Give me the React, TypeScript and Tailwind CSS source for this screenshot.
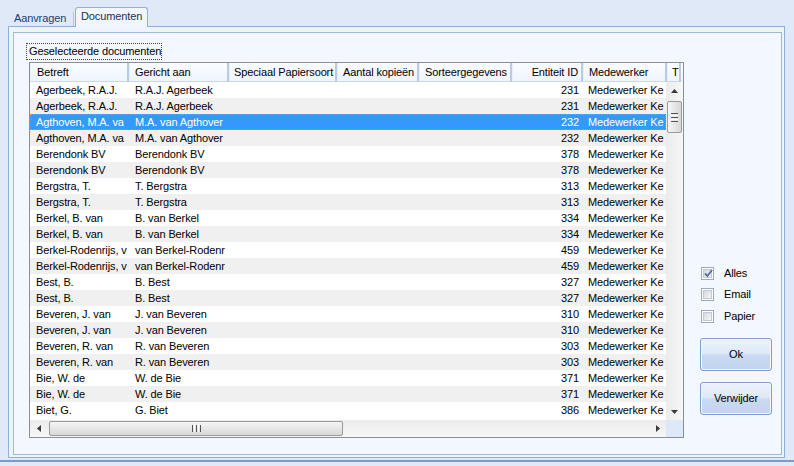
import React from "react";

type Row = [string, string, string];

const rows: Row[] = [
  ["Agerbeek, R.A.J.", "R.A.J. Agerbeek", "231"],
  ["Agerbeek, R.A.J.", "R.A.J. Agerbeek", "231"],
  ["Agthoven, M.A. va", "M.A. van Agthover", "232"],
  ["Agthoven, M.A. va", "M.A. van Agthover", "232"],
  ["Berendonk BV", "Berendonk BV", "378"],
  ["Berendonk BV", "Berendonk BV", "378"],
  ["Bergstra, T.", "T. Bergstra", "313"],
  ["Bergstra, T.", "T. Bergstra", "313"],
  ["Berkel, B. van", "B. van Berkel", "334"],
  ["Berkel, B. van", "B. van Berkel", "334"],
  ["Berkel-Rodenrijs, v", "van Berkel-Rodenr", "459"],
  ["Berkel-Rodenrijs, v", "van Berkel-Rodenr", "459"],
  ["Best, B.", "B. Best", "327"],
  ["Best, B.", "B. Best", "327"],
  ["Beveren, J. van", "J. van Beveren", "310"],
  ["Beveren, J. van", "J. van Beveren", "310"],
  ["Beveren, R. van", "R. van Beveren", "303"],
  ["Beveren, R. van", "R. van Beveren", "303"],
  ["Bie, W. de", "W. de Bie", "371"],
  ["Bie, W. de", "W. de Bie", "371"],
  ["Biet, G.", "G. Biet", "386"],
];

const headCell =
  "h-full shrink-0 overflow-hidden whitespace-nowrap border-l border-l-[#e6eef8] border-r-2 border-r-[#b7cbe6] border-b border-b-[#c9d8ec] leading-[18px]";

const headers: { label: string; cls: string }[] = [
  { label: "Betreft", cls: "w-[99px] pl-[6px]" },
  { label: "Gericht aan", cls: "w-[100px] pl-[5px]" },
  { label: "Speciaal Papiersoort", cls: "w-[108px] pl-[4px]" },
  { label: "Aantal kopieën", cls: "w-[82px] pl-[5px]" },
  { label: "Sorteergegevens", cls: "w-[93px] pl-[5px]" },
  { label: "Entiteit ID", cls: "w-[71px] pr-[3px] text-right" },
  { label: "Medewerker", cls: "w-[84px] pl-[5px]" },
  { label: "T", cls: "w-[14px] pl-[4px]" },
];

function Arrow({ dir }: { dir: "up" | "down" | "left" | "right" }) {
  const pts =
    dir === "up"
      ? "0,4 3.5,0 7,4"
      : dir === "down"
      ? "0,0 7,0 3.5,4"
      : dir === "left"
      ? "4,0 4,7 0,3.5"
      : "0,0 4,3.5 0,7";
  const w = dir === "up" || dir === "down" ? 7 : 4;
  const h = dir === "up" || dir === "down" ? 4 : 7;
  return (
    <svg width={w} height={h} viewBox={`0 0 ${w} ${h}`}>
      <polygon points={pts} fill="#3a3a3a" />
    </svg>
  );
}

function CheckBox({ checked }: { checked?: boolean }) {
  return (
    <div className="w-[13px] h-[13px] border border-[#9aaabf] bg-white p-[1px] shrink-0 relative">
      <div className="w-full h-full border border-[#c3c9d1] bg-linear-to-br from-[#d4d8de] to-[#f6f6f6]" />
      {checked && (
        <svg className="absolute left-[2px] top-[1px]" width="9" height="9" viewBox="0 0 9 9">
          <path d="M1 4.5 L3.5 7 L8 1" stroke="#4f6e9e" strokeWidth="1.8" fill="none" />
        </svg>
      )}
    </div>
  );
}

function Button({ label, cls }: { label: string; cls: string }) {
  return (
    <div
      className={
        "w-[72px] h-[33px] rounded-[3px] border border-[#7f9fcf] bg-[linear-gradient(#ecf2fb_0%,#dfe9f8_46%,#c9daf2_52%,#c2d5f0_100%)] shadow-[inset_0_0_0_1px_#f4f8fe] flex items-center justify-center text-black " +
        cls
      }
    >
      {label}
    </div>
  );
}

export default function App() {
  return (
    <div className="w-[794px] h-[466px] bg-[#dfe9f7] font-['Liberation_Sans',Arial,sans-serif] text-[11px] tracking-[-0.12px] text-black overflow-hidden flex flex-col">
      {/* tab strip */}
      <div className="h-[26px] flex items-end pl-[8px] shrink-0">
        <div className="w-[66px] h-[14px] border-r border-r-[#b3c7e2] pl-[6px] leading-[12px] text-[#1d3d70]">
          Aanvragen
        </div>
        <div className="ml-[1px] w-[73px] h-[20px] -mb-px relative z-10 border border-b-0 border-[#8eb0dc] rounded-t-[3px] bg-[#f1f6fd] pl-[5px] pt-[1px] leading-[14px] text-[#1e2f4e]">
          Documenten
        </div>
      </div>

      {/* tab page */}
      <div className="ml-[8px] w-[777px] h-[432px] border border-[#8eb0dc] bg-[#eef4fd] pl-[4px] pt-[5px] pr-[2px] pb-[2px] shrink-0">
        <div className="w-full h-full border border-[#9cb8de] bg-[#f3f7fe] flex pl-[12px] pt-[10px]">
          {/* left column */}
          <div className="flex flex-col w-[658px] shrink-0">
            <div className="w-[136px] h-[17px] border border-dotted border-[#444] pl-[2px] leading-[15px] whitespace-nowrap">
              Geselecteerde documenten
            </div>
            <div className="mt-[2px] ml-[3px] w-[655px] h-[376px] border border-[#8a8f97] bg-white flex flex-col">
              {/* header */}
              <div className="h-[19px] flex bg-linear-to-b from-[#fafcff] to-[#eef4fc] shrink-0 overflow-hidden">
                {headers.map((h) => (
                  <div key={h.label} className={headCell + " " + h.cls}>
                    {h.label}
                  </div>
                ))}
              </div>
              {/* body */}
              <div className="h-[338px] flex shrink-0">
                <div className="w-[636px] h-full overflow-hidden">
                  {rows.map((r, i) => {
                    const sel = i === 2;
                    const bg = sel
                      ? "bg-[#3399ff] text-white outline-1 outline-dotted -outline-offset-1 outline-[#e38a2c]"
                      : i % 2 === 1
                      ? "bg-[#f0f0f0]"
                      : "bg-white";
                    return (
                      <div key={i} className={"h-[16px] flex leading-[16px] whitespace-nowrap " + bg}>
                        <div className="w-[99px] shrink-0 overflow-hidden pl-[6px]">{r[0]}</div>
                        <div className="w-[100px] shrink-0 overflow-hidden pl-[6px]">{r[1]}</div>
                        <div className="w-[108px] shrink-0" />
                        <div className="w-[82px] shrink-0" />
                        <div className="w-[93px] shrink-0" />
                        <div className="w-[71px] shrink-0 overflow-hidden pr-[4px] text-right">{r[2]}</div>
                        <div className="w-[83px] shrink-0 overflow-hidden pl-[5px]">Medewerker Ke</div>
                      </div>
                    );
                  })}
                </div>
                {/* vertical scrollbar */}
                <div className="w-[17px] h-full flex flex-col bg-linear-to-r from-[#ebebeb] to-[#f7f7f7]">
                  <div className="h-[17px] flex items-center justify-center shrink-0">
                    <Arrow dir="up" />
                  </div>
                  <div className="flex-1">
                    <div className="mt-[2px] mx-auto w-[15px] h-[32px] rounded-[2px] border border-[#9a9a9a] bg-linear-to-r from-[#f6f6f6] to-[#d8d8d8] flex flex-col items-center justify-center gap-[1px]">
                      <div className="w-[7px] h-[1px] bg-[#555]" />
                      <div className="w-[7px] h-[1px] bg-[#fff]" />
                      <div className="w-[7px] h-[1px] bg-[#555]" />
                      <div className="w-[7px] h-[1px] bg-[#fff]" />
                      <div className="w-[7px] h-[1px] bg-[#555]" />
                    </div>
                  </div>
                  <div className="h-[17px] flex items-center justify-center shrink-0">
                    <Arrow dir="down" />
                  </div>
                </div>
              </div>
              {/* horizontal scrollbar */}
              <div className="h-[17px] flex shrink-0">
                <div className="w-[636px] h-full flex bg-linear-to-b from-[#ebebeb] to-[#f7f7f7]">
                  <div className="w-[17px] h-full flex items-center justify-center shrink-0">
                    <Arrow dir="left" />
                  </div>
                  <div className="flex-1 flex items-center">
                    <div className="ml-[2px] w-[294px] h-[15px] rounded-[2px] border border-[#9a9a9a] bg-linear-to-b from-[#f6f6f6] to-[#d8d8d8] flex items-center justify-center gap-[1px]">
                      <div className="w-[1px] h-[7px] bg-[#555]" />
                      <div className="w-[1px] h-[7px] bg-[#fff]" />
                      <div className="w-[1px] h-[7px] bg-[#555]" />
                      <div className="w-[1px] h-[7px] bg-[#fff]" />
                      <div className="w-[1px] h-[7px] bg-[#555]" />
                    </div>
                  </div>
                  <div className="w-[17px] h-full flex items-center justify-center shrink-0">
                    <Arrow dir="right" />
                  </div>
                </div>
                <div className="w-[17px] h-full bg-[#dde8f8]" />
              </div>
            </div>
          </div>

          {/* right column */}
          <div className="ml-[16px] w-[72px] flex flex-col">
            <div className="mt-[224px] h-[13px] flex items-center pl-[1px]">
              <CheckBox checked />
              <span className="ml-[10px] leading-[13px]">Alles</span>
            </div>
            <div className="mt-[8px] h-[13px] flex items-center pl-[1px]">
              <CheckBox />
              <span className="ml-[10px] leading-[13px]">Email</span>
            </div>
            <div className="mt-[9px] h-[13px] flex items-center pl-[1px]">
              <CheckBox />
              <span className="ml-[10px] leading-[13px]">Papier</span>
            </div>
            <Button label="Ok" cls="mt-[15px]" />
            <Button label="Verwijder" cls="mt-[11px]" />
          </div>
        </div>
      </div>

      <div className="mt-[2px] h-[2px] bg-[#7d9ac4] shrink-0" />
    </div>
  );
}
